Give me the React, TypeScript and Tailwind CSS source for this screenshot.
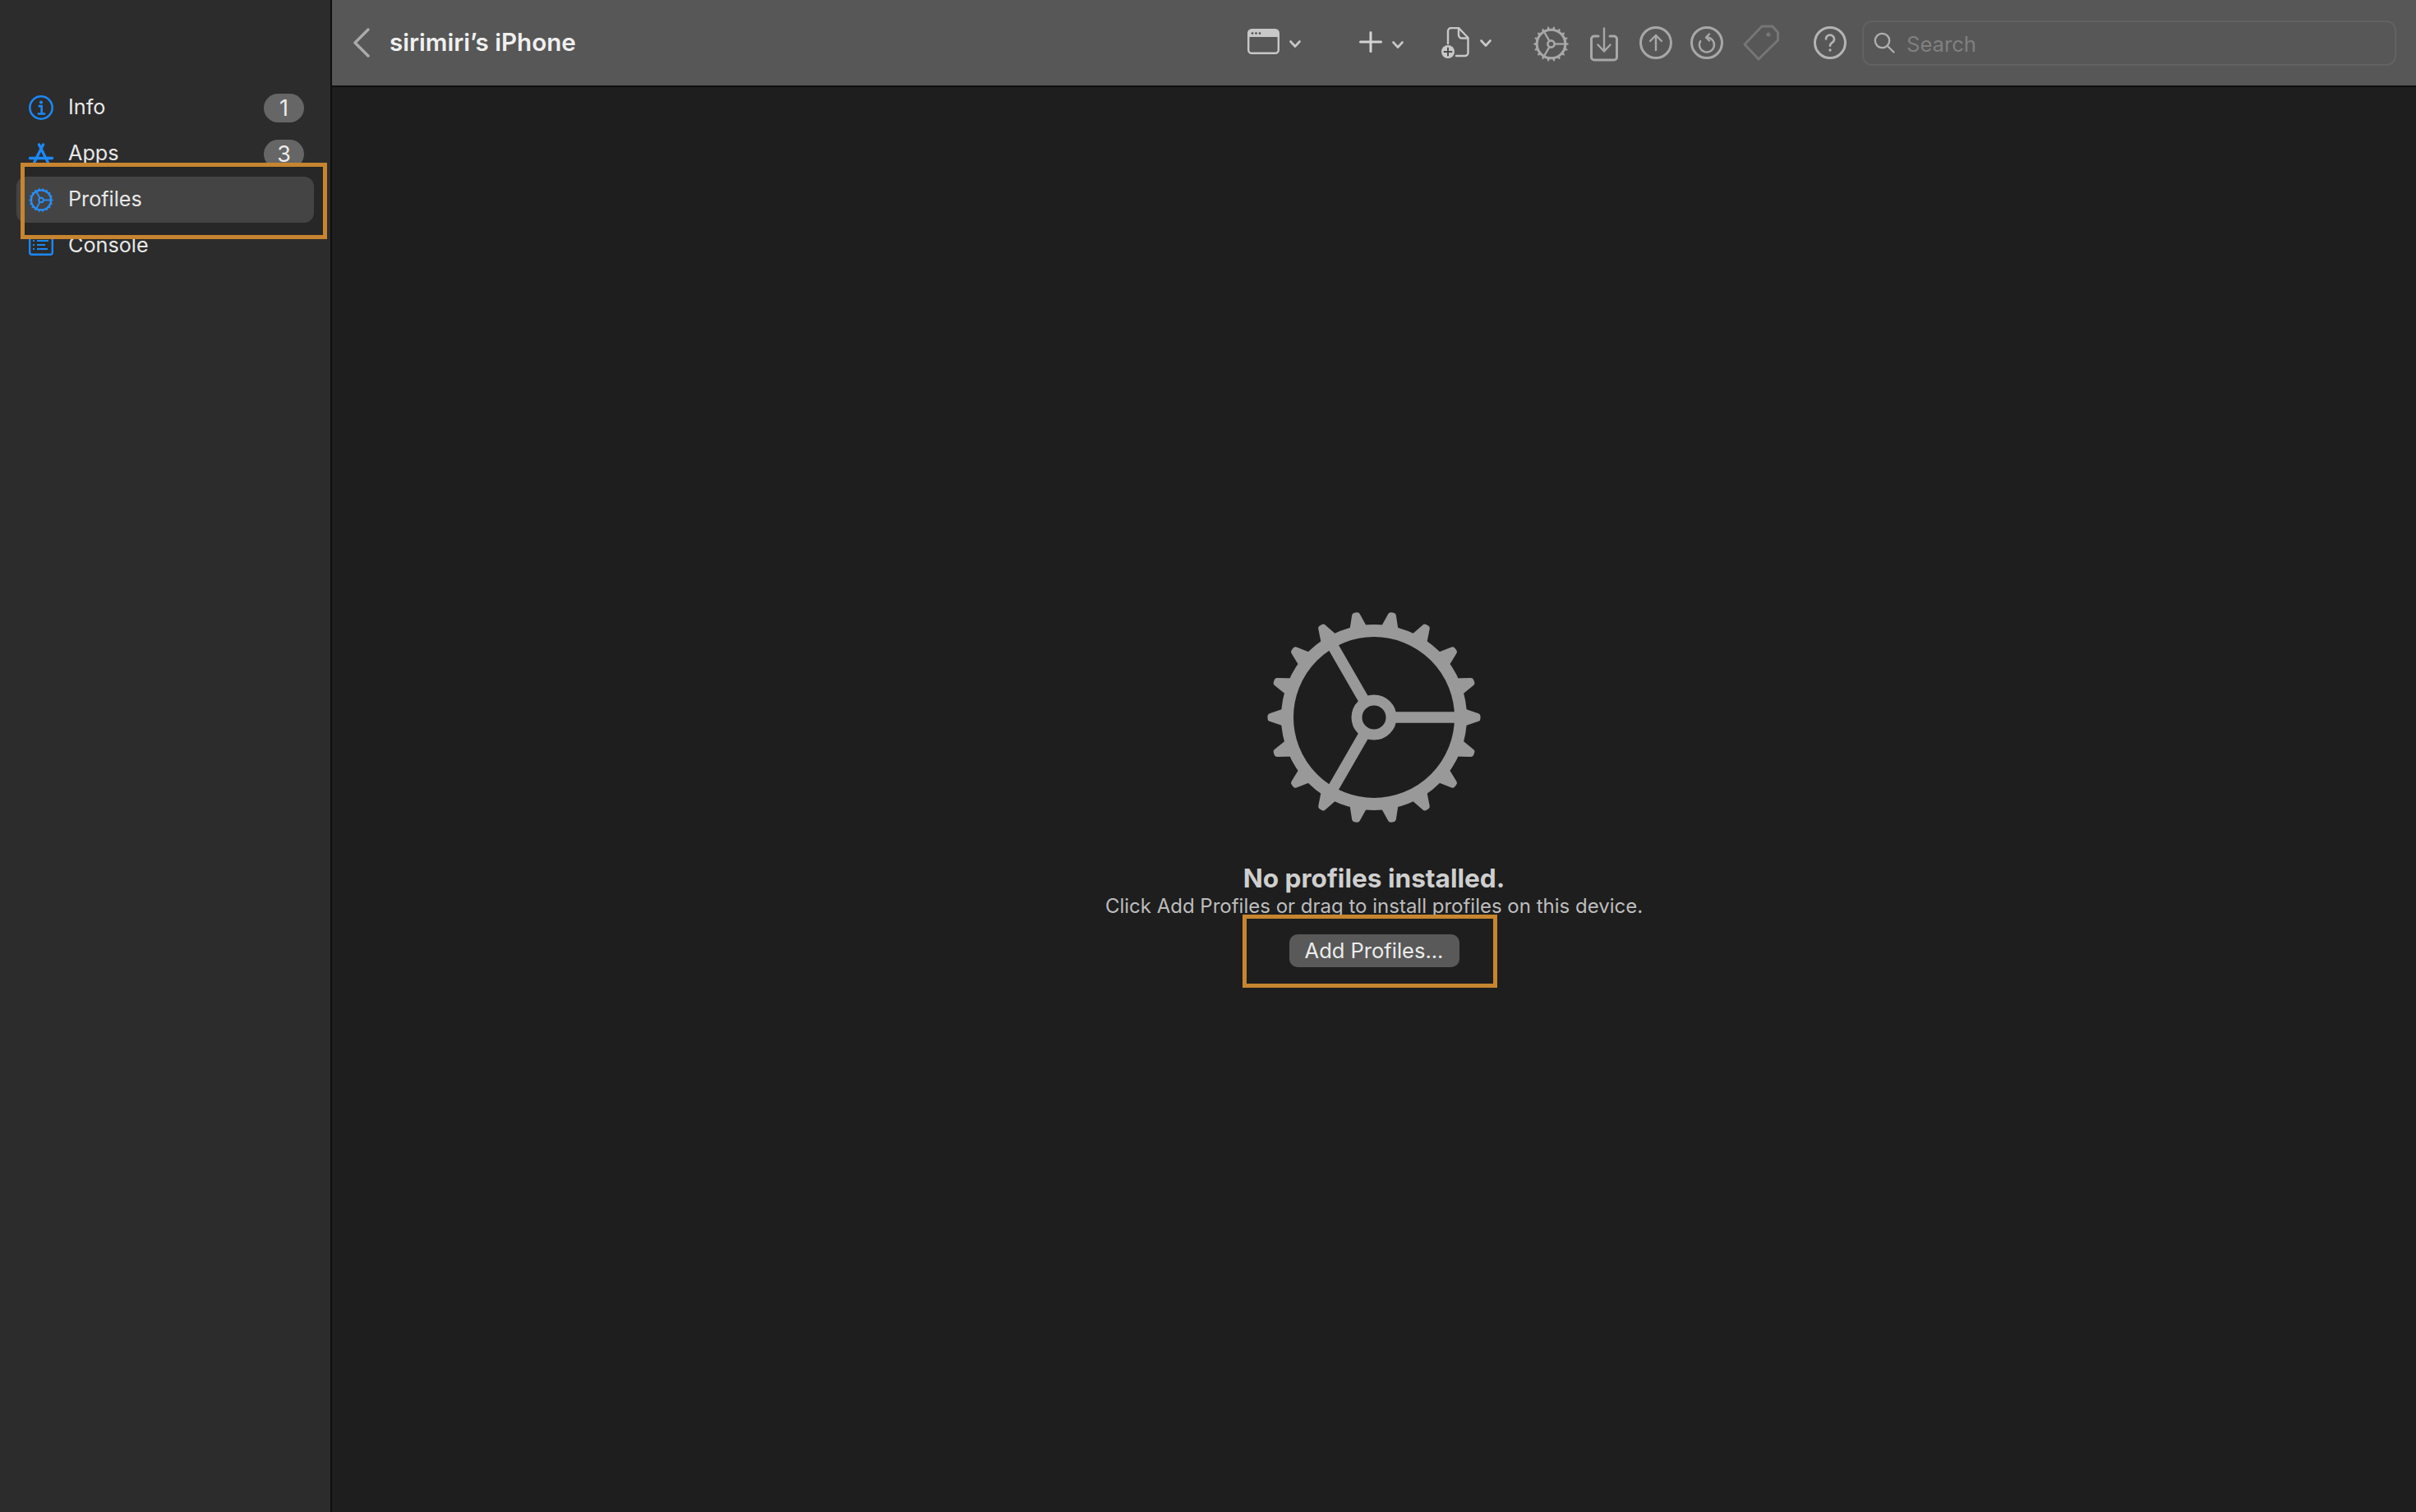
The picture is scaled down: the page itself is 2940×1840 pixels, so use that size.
import type { ReactNode } from "react";

const font = "font-['Inter','Liberation_Sans',sans-serif]";

function Gear({ size, ring = 15, hub = 21, hubWidth = 13, spoke = 13.5 }: { size: number; ring?: number; hub?: number; hubWidth?: number; spoke?: number }) {
  const teeth = Array.from({ length: 18 }, (_, i) => i * 20);
  return (
    <svg width={size} height={size} viewBox="-131 -131 262 262" fill="none" stroke="currentColor">
      {teeth.map((a) => (
        <polygon key={a} transform={`rotate(${a})`} points="104,-9 126,-1.5 126,1.5 104,9" fill="currentColor" strokeWidth="7" strokeLinejoin="round" />
      ))}
      <circle r="105.5" strokeWidth={ring} />
      <circle r={hub} strokeWidth={hubWidth} />
      {[0, 120, 240].map((a) => (
        <line key={a} transform={`rotate(${a})`} x1={hub} x2="100" y1="0" y2="0" strokeWidth={spoke} />
      ))}
    </svg>
  );
}

function InfoIcon() {
  return (
    <svg width="32" height="32" viewBox="0 0 32 32" fill="none" stroke="currentColor" strokeWidth="2.7">
      <circle cx="16" cy="16" r="14.6" />
      <circle cx="16" cy="9" r="2.2" fill="currentColor" stroke="none" />
      <path d="M12.5 14h4.2v10M11.5 24h10" />
    </svg>
  );
}

function AppsIcon() {
  return (
    <svg width="30" height="34" viewBox="0 0 30 34" fill="none" stroke="currentColor" strokeWidth="3.4" strokeLinecap="round">
      <path d="M12.5 2l12 24M17.5 2l-12 24M1.5 18.5h27" />
    </svg>
  );
}

function ConsoleIcon() {
  return (
    <svg width="30" height="24" viewBox="0 0 30 24" fill="none" stroke="currentColor" strokeWidth="2">
      <rect x="1.2" y="1.2" width="27.6" height="21.6" rx="2.5" strokeWidth="2.4" />
      <path d="M5 6h2M10 6h14M5 11h2M10 11h10M5 16h2M10 16h13" />
    </svg>
  );
}

function SmallChevron() {
  return (
    <svg width="14" height="9" viewBox="0 0 14 9" fill="none" stroke="#c8c8c8" strokeWidth="2.6" strokeLinecap="round" strokeLinejoin="round">
      <polyline points="1.5,1.5 7,7.5 12.5,1.5" />
    </svg>
  );
}

function Tool({ children, className = "" }: { children: ReactNode; className?: string }) {
  return <div className={`flex shrink-0 items-center ${className}`}>{children}</div>;
}

function Toolbar() {
  return (
    <header className="flex h-[104px] shrink-0 items-center bg-[#575757] pl-[26px] pr-[24px]">
      <svg width="20" height="36" viewBox="0 0 20 36" fill="none" stroke="#ababab" strokeWidth="3.4" strokeLinecap="round" strokeLinejoin="round">
        <polyline points="18,2 2,18 18,34" />
      </svg>
      <h1 className="ml-[24px] text-[29.6px] font-semibold leading-none text-[#f0f0f0]">sirimiri’s iPhone</h1>
      <div className="flex-1" />

      <Tool className="-mt-[3px]">
        <svg width="39" height="31" viewBox="0 0 39 31" fill="none">
          <rect x="1.2" y="1.2" width="36.6" height="28.6" rx="4" stroke="#c8c8c8" strokeWidth="2.4" />
          <path d="M1 5a4 4 0 0 1 4-4h29a4 4 0 0 1 4 4v5H1z" fill="#c8c8c8" />
          <circle cx="6" cy="5.5" r="1.3" fill="#4a4a4a" />
          <circle cx="10.5" cy="5.5" r="1.3" fill="#4a4a4a" />
          <circle cx="15" cy="5.5" r="1.3" fill="#4a4a4a" />
        </svg>
        <div className="ml-[12px] mt-[6px]"><SmallChevron /></div>
      </Tool>

      <Tool className="-mt-[3px] ml-[71px]">
        <svg width="28" height="26" viewBox="0 0 28 26" stroke="#d4d4d4" strokeWidth="3" strokeLinecap="round">
          <path d="M14 1.5v23M1.5 13h25" />
        </svg>
        <div className="ml-[12px] mt-[7px]"><SmallChevron /></div>
      </Tool>

      <Tool className="ml-[46px]">
        <svg width="34" height="38" viewBox="0 0 34 38" fill="none" stroke="#c8c8c8" strokeWidth="2.4" strokeLinecap="round" strokeLinejoin="round">
          <path d="M8 20V5a4 4 0 0 1 4-4h9l11.5 12v18a4 4 0 0 1-4 4H18" />
          <path d="M21 1.5v8a4 4 0 0 0 4 4h7" />
          <circle cx="8" cy="30" r="8" fill="#c8c8c8" stroke="none" />
          <path d="M8 25.5v9M3.5 30h9" stroke="#4d4d4d" strokeWidth="2" />
        </svg>
        <div className="ml-[13px]"><SmallChevron /></div>
      </Tool>

      <Tool className="ml-[51px] mt-[2px] text-[#a8a8a8]">
        <Gear size={43} ring={19} hub={25} hubWidth={16} spoke={14} />
      </Tool>

      <Tool className="ml-[26px] mt-[4px]">
        <svg width="34" height="42" viewBox="0 0 34 42" fill="none" stroke="#a8a8a8" strokeWidth="3" strokeLinecap="round" strokeLinejoin="round">
          <path d="M10 11H5a3.5 3.5 0 0 0-3.5 3.5v22A3.5 3.5 0 0 0 5 40h24a3.5 3.5 0 0 0 3.5-3.5v-22A3.5 3.5 0 0 0 29 11h-5" />
          <path d="M17 1.5v27M9.5 21.5l7.5 8 7.5-8" strokeWidth="2.4" />
        </svg>
      </Tool>

      <Tool className="ml-[26px]">
        <svg width="40" height="40" viewBox="0 0 40 40" fill="none" stroke="#a8a8a8" strokeWidth="3" strokeLinecap="round" strokeLinejoin="round">
          <circle cx="20" cy="20" r="18.5" />
          <path d="M20 29V11M13 18l7-7 7 7" strokeWidth="2.4" />
        </svg>
      </Tool>

      <Tool className="ml-[22px]">
        <svg width="40" height="40" viewBox="0 0 40 40" fill="none" stroke="#a8a8a8" strokeWidth="3" strokeLinecap="round" strokeLinejoin="round">
          <circle cx="20" cy="20" r="18.5" />
          <path d="M20 13.5a9 9 0 1 1-7.8 4.5" strokeWidth="2.4" />
          <path d="M23 9.5l-4 4 4 4" strokeWidth="2.4" />
        </svg>
      </Tool>

      <Tool className="ml-[24px]">
        <svg width="44" height="44" viewBox="0 0 44 44" fill="none" stroke="#767676" strokeWidth="3" strokeLinejoin="round">
          <path d="M23 2h13l6.5 7.5V19L19 42 2 24z" />
          <circle cx="31" cy="12" r="2.6" fill="#767676" stroke="none" />
        </svg>
      </Tool>

      <Tool className="ml-[42px]">
        <svg width="40" height="40" viewBox="0 0 40 40" fill="none" stroke="#b4b4b4" strokeWidth="3" strokeLinecap="round">
          <circle cx="20" cy="20" r="18.5" />
          <path d="M15 15.5a5 5 0 1 1 7.5 4.4c-1.7 1-2.5 2-2.5 3.8" strokeWidth="2.6" />
          <circle cx="20" cy="29" r="1.7" fill="#b4b4b4" stroke="none" />
        </svg>
      </Tool>

      <div className="ml-[19px] flex h-[55px] w-[650px] items-center rounded-[12px] border-2 border-[#626262] pl-[12px]">
        <svg width="26" height="26" viewBox="0 0 26 26" fill="none" stroke="#b0b0b0" strokeWidth="2.3" strokeLinecap="round">
          <circle cx="10.5" cy="10.5" r="8.7" />
          <path d="M17 17l7.5 7.5" />
        </svg>
        <span className="ml-[14px] mt-[4px] text-[25.6px] leading-none text-[#808080]">Search</span>
      </div>
    </header>
  );
}

function NavRow({ icon, label, badge }: { icon: ReactNode; label: string; badge?: string }) {
  return (
    <div className="flex h-[56px] items-center pl-[15px] pr-[12px]">
      <div className="flex w-[30px] shrink-0 justify-center text-[#1c88f5]">{icon}</div>
      <span className="ml-[18px] flex-1 text-[25.2px] leading-none text-[#e8e8e8]">{label}</span>
      {badge && (
        <span className="flex h-[35px] w-[49px] items-center justify-center rounded-full bg-[#666666] text-[27px] leading-none text-[#ececec]">
          {badge}
        </span>
      )}
    </div>
  );
}

function Sidebar() {
  return (
    <aside className="w-[402px] shrink-0 bg-[#2c2c2c] pl-[20px] pr-[20px] pt-[103px]">
      <NavRow icon={<InfoIcon />} label="Info" badge="1" />
      <NavRow icon={<div className="mt-[8px]"><AppsIcon /></div>} label="Apps" badge="3" />
      <div className="relative">
        <div className="absolute -bottom-[20px] -right-[16px] -top-[17px] left-[5px] bg-[#272727]" />
        <div className="absolute inset-0 rounded-[12px] bg-[#444444]" />
        <div className="relative text-[#e8e8e8]">
          <div className="flex h-[56px] items-center pl-[15px]">
            <div className="flex w-[30px] shrink-0 justify-center text-[#2a8df2]">
              <Gear size={31} ring={22} hub={24} hubWidth={17} spoke={17} />
            </div>
            <span className="ml-[18px] text-[25.2px] leading-none">Profiles</span>
          </div>
        </div>
        <div className="absolute -bottom-[20px] -right-[16px] -top-[17px] left-[5px] border-[5px] border-[#c7852f]" />
      </div>
      <NavRow icon={<ConsoleIcon />} label="Console" />
    </aside>
  );
}

export default function App() {
  return (
    <div className={`flex h-screen w-screen overflow-hidden bg-[#1e1e1e] ${font}`}>
      <Sidebar />
      <div className="w-[2px] shrink-0 bg-[#0e0e0e]" />
      <div className="flex min-w-0 flex-1 flex-col">
        <Toolbar />
        <div className="h-[2px] shrink-0 bg-[#0e0e0e]" />
        <main className="flex flex-1 flex-col items-center bg-[#1e1e1e] pt-[636px]">
          <div className="text-[#999999]">
            <Gear size={262} />
          </div>
          <p className="mt-[46px] text-[31.6px] font-bold leading-[38px] text-[#cfcfcf]">No profiles installed.</p>
          <p className="text-[24px] leading-[29px] text-[#bdbdbd]">Click Add Profiles or drag to install profiles on this device.</p>
          <div className="relative mt-[20px]">
            <div className="absolute -bottom-[25px] -left-[57px] -right-[46px] -top-[24px] border-[5px] border-[#c7852f] bg-[#1e1e1e]" />
            <button className="relative flex h-[40px] w-[207px] items-center justify-center rounded-[10px] bg-[#595959] text-[25.5px] leading-none text-[#ececec]">
              Add Profiles...
            </button>
          </div>
        </main>
      </div>
    </div>
  );
}
